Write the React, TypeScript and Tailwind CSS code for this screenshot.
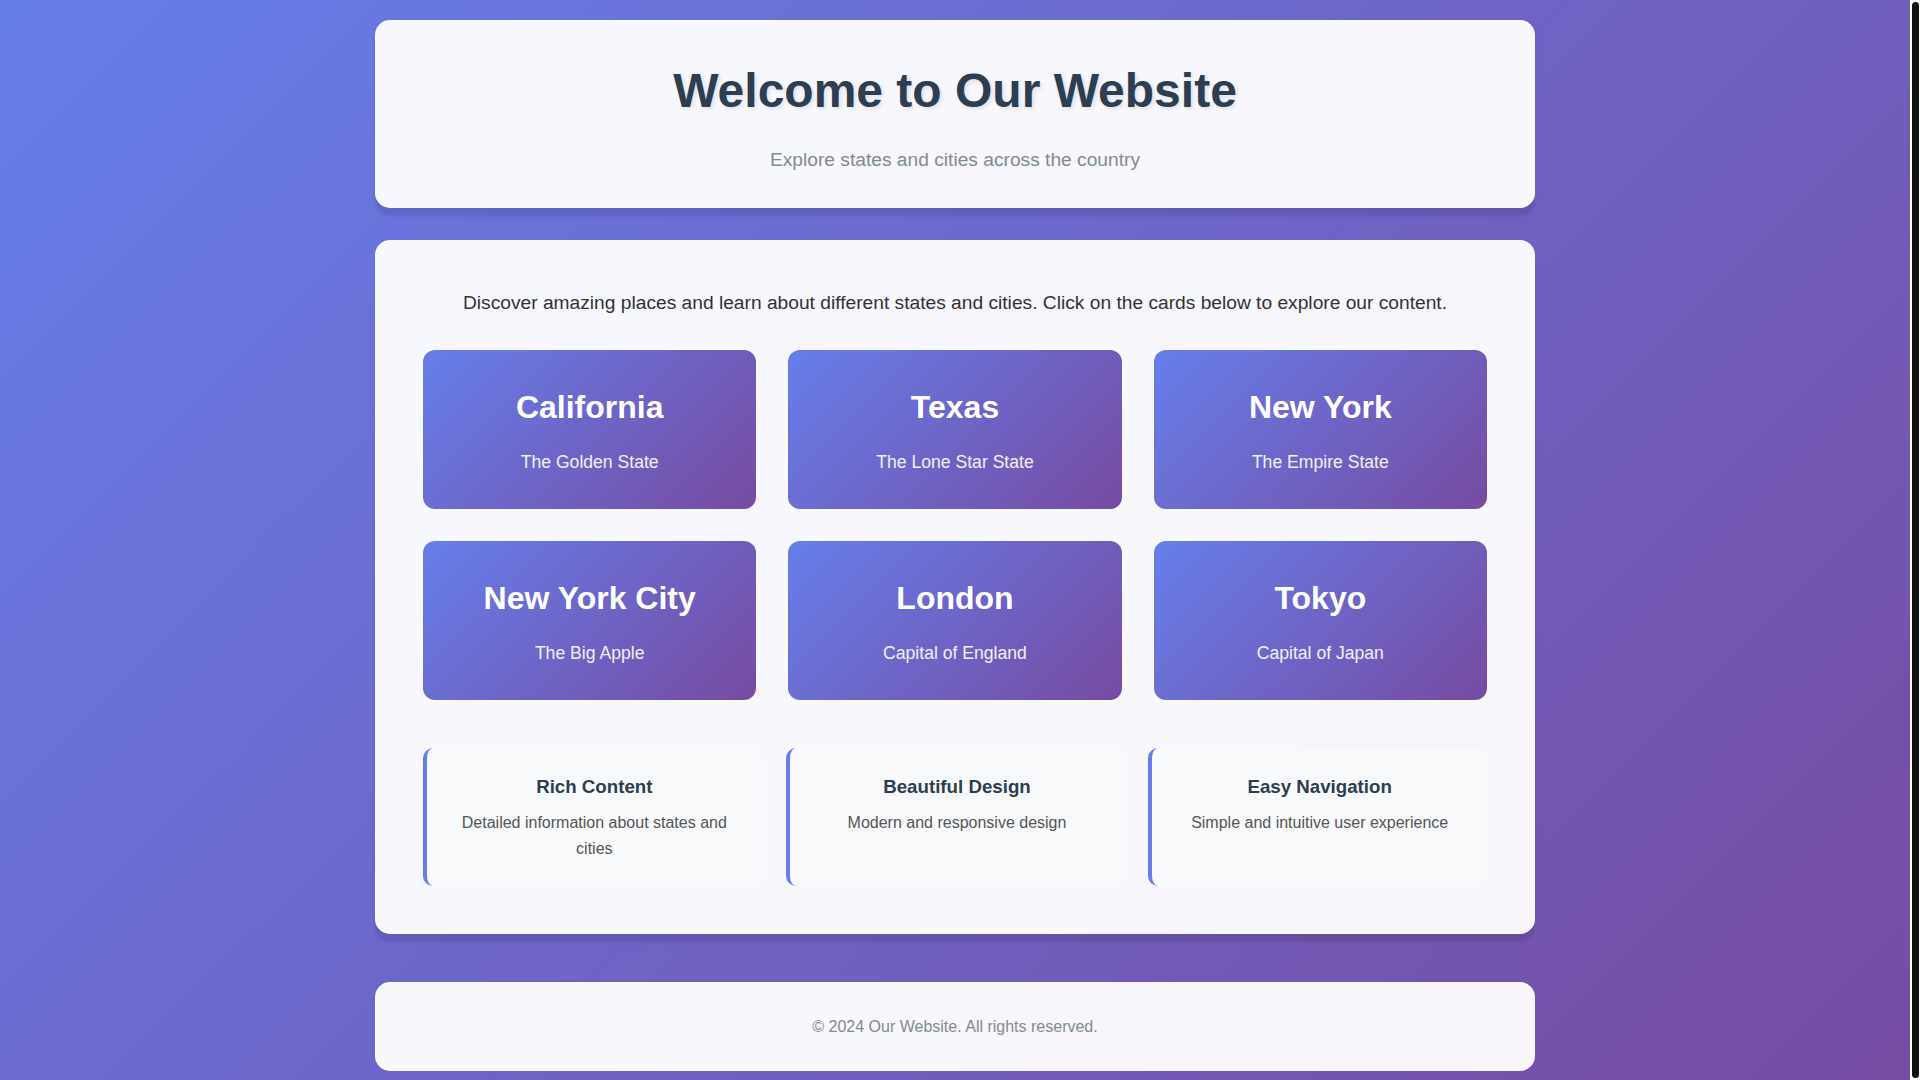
import React from 'react';

const places = [
  { name: 'California', tagline: 'The Golden State' },
  { name: 'Texas', tagline: 'The Lone Star State' },
  { name: 'New York', tagline: 'The Empire State' },
  { name: 'New York City', tagline: 'The Big Apple' },
  { name: 'London', tagline: 'Capital of England' },
  { name: 'Tokyo', tagline: 'Capital of Japan' },
];

const features = [
  { title: 'Rich Content', text: 'Detailed information about states and cities' },
  { title: 'Beautiful Design', text: 'Modern and responsive design' },
  { title: 'Easy Navigation', text: 'Simple and intuitive user experience' },
];

const PlaceCard: React.FC<{ name: string; tagline: string }> = ({ name, tagline }) => (
  <div className="rounded-xl bg-[linear-gradient(135deg,#667eea_0%,#764ba2_100%)] px-6 py-8 text-center cursor-pointer">
    <h2 className="mb-[14px] text-[32px] font-bold leading-[51px] text-white">{name}</h2>
    <p className="text-[17.6px] leading-[30px] text-white/90">{tagline}</p>
  </div>
);

export default function App() {
  return (
    <div className="flex h-screen overflow-hidden bg-white">
      <div className="min-w-0 flex-1 overflow-hidden">
        <div className="min-h-full bg-[linear-gradient(135deg,#667eea_0%,#764ba2_100%)] font-['Liberation_Sans',Arial,sans-serif] leading-[1.6] text-[#333]">
          <div className="mx-auto max-w-[1200px] p-5">
            {/* Header */}
            <header className="mb-8 rounded-[15px] bg-white/95 px-8 pt-8 pb-8 text-center shadow-[0_8px_3px_rgba(0,0,0,0.1)]">
              <h1 className="mb-4 text-[48px] font-bold leading-[77px] text-[#2c3e50] [text-shadow:2px_2px_4px_rgba(0,0,0,0.1)]">
                Welcome to Our Website
              </h1>
              <p className="text-[19.2px] leading-[30.7px] text-[#7f8c8d]">Explore states and cities across the country</p>
            </header>

            {/* Main content */}
            <main className="rounded-[15px] bg-white/95 p-12 shadow-[0_8px_3px_rgba(0,0,0,0.1)]">
              <p className="mb-8 text-center text-[19.2px] leading-[30.7px] text-[#333]">
                Discover amazing places and learn about different states and cities. Click on the cards below to explore our content.
              </p>

              <div className="grid grid-cols-3 gap-8">
                {places.map((p) => (
                  <PlaceCard key={p.name} name={p.name} tagline={p.tagline} />
                ))}
              </div>

              <div className="mt-12 grid grid-cols-3 gap-6">
                {features.map((f) => (
                  <div key={f.title} className="rounded-[10px] border-l-4 border-[#667eea] bg-[#f8f9fa] p-6 text-center">
                    <h3 className="mb-2 text-[18.72px] font-bold leading-[30px] text-[#2c3e50]">{f.title}</h3>
                    <p className="text-[16px] leading-[25.6px] text-[#555]">{f.text}</p>
                  </div>
                ))}
              </div>
            </main>

            {/* Footer */}
            <footer className="mt-12 rounded-[15px] bg-white/95 px-8 py-8 text-center">
              <p className="text-[16px] leading-[25px] text-[#7f8c8d]">© 2024 Our Website. All rights reserved.</p>
            </footer>
          </div>
        </div>
      </div>
      {/* page scrollbar */}
      <div className="flex w-[10px] shrink-0 justify-center bg-white py-[2px]">
        <div className="w-[7px] rounded-full bg-[#111]" />
      </div>
    </div>
  );
}
